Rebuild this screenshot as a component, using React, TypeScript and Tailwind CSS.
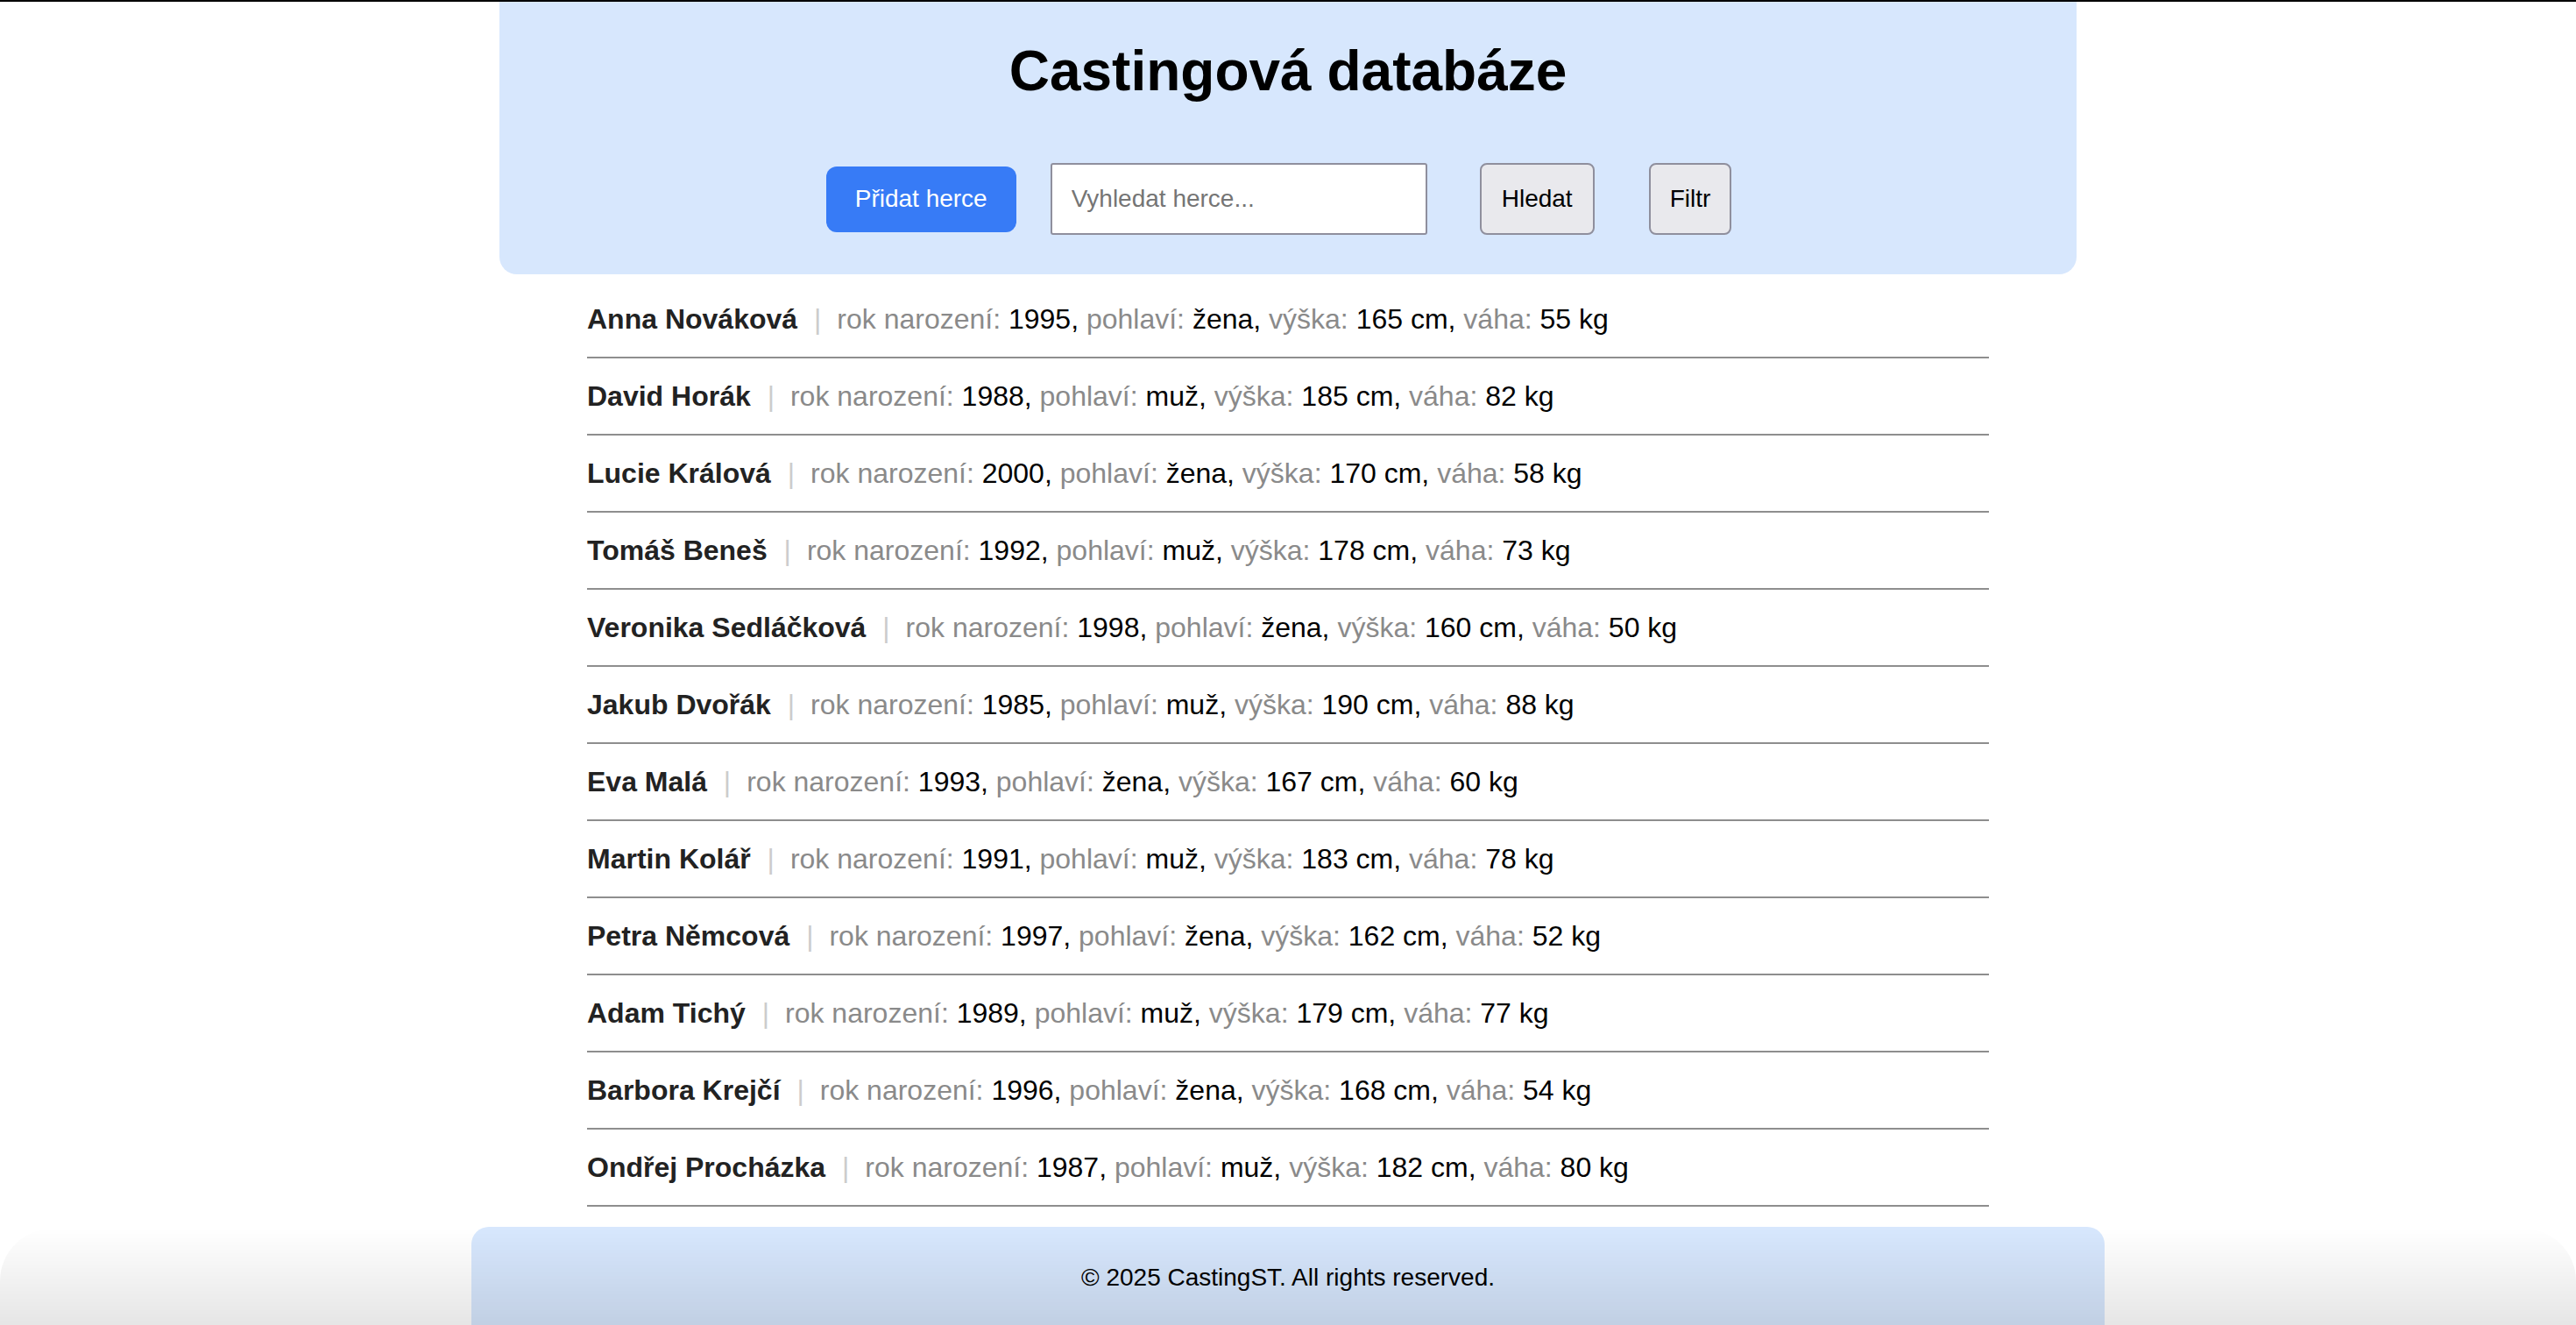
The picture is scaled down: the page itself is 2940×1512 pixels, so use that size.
import React from 'react';

type Actor = {
  name: string;
  year: number;
  gender: string;
  height: number;
  weight: number;
};

const actors: Actor[] = [
  { name: 'Anna Nováková', year: 1995, gender: 'žena', height: 165, weight: 55 },
  { name: 'David Horák', year: 1988, gender: 'muž', height: 185, weight: 82 },
  { name: 'Lucie Králová', year: 2000, gender: 'žena', height: 170, weight: 58 },
  { name: 'Tomáš Beneš', year: 1992, gender: 'muž', height: 178, weight: 73 },
  { name: 'Veronika Sedláčková', year: 1998, gender: 'žena', height: 160, weight: 50 },
  { name: 'Jakub Dvořák', year: 1985, gender: 'muž', height: 190, weight: 88 },
  { name: 'Eva Malá', year: 1993, gender: 'žena', height: 167, weight: 60 },
  { name: 'Martin Kolář', year: 1991, gender: 'muž', height: 183, weight: 78 },
  { name: 'Petra Němcová', year: 1997, gender: 'žena', height: 162, weight: 52 },
  { name: 'Adam Tichý', year: 1989, gender: 'muž', height: 179, weight: 77 },
  { name: 'Barbora Krejčí', year: 1996, gender: 'žena', height: 168, weight: 54 },
  { name: 'Ondřej Procházka', year: 1987, gender: 'muž', height: 182, weight: 80 },
];

function ActorRow({ actor }: { actor: Actor }) {
  return (
    <li className="py-[24px] border-b-2 border-[#8e8e8e] text-[32px] leading-[38px] whitespace-nowrap">
      <strong className="font-bold text-[#222222]">{actor.name}</strong>{' '}
      <span className="ml-[10px] mr-[18px] text-[#cccccc]">|</span>
      <span className="text-[#8a8a8a]">rok narození:</span> <span className="text-black">{actor.year},</span>{' '}
      <span className="text-[#8a8a8a]">pohlaví:</span> <span className="text-black">{actor.gender},</span>{' '}
      <span className="text-[#8a8a8a]">výška:</span> <span className="text-black">{actor.height} cm,</span>{' '}
      <span className="text-[#8a8a8a]">váha:</span> <span className="text-black">{actor.weight} kg</span>
    </li>
  );
}

export default function App() {
  return (
    <div className="min-h-screen bg-white border-t-2 border-black font-['Liberation_Sans',Arial,sans-serif]">
      {/* Header */}
      <header className="w-[1800px] mx-auto bg-[#d7e7fd] rounded-b-[20px] pt-[42px] pb-[45px]">
        <h1 className="text-center text-[64px] leading-[74px] font-bold text-black">Castingová databáze</h1>
        <div className="mt-[68px] flex items-center justify-center pr-[21px]">
          <button className="h-[75px] px-[33px] rounded-[12px] bg-[#377bf6] text-white text-[28px]">
            Přidat herce
          </button>
          <input
            type="text"
            placeholder="Vyhledat herce..."
            className="ml-[39px] w-[430px] h-[82px] pl-[22px] bg-white border-2 border-[#8f8f9d] rounded-[3px] text-[28px] placeholder:text-[#757575] outline-none"
          />
          <button className="ml-[60px] h-[82px] px-[23px] bg-[#e9e9ed] border-2 border-[#8f8f9d] rounded-[8px] text-[28px] text-black">
            Hledat
          </button>
          <button className="ml-[62px] h-[82px] px-[22px] bg-[#e9e9ed] border-2 border-[#8f8f9d] rounded-[8px] text-[28px] text-black">
            Filtr
          </button>
        </div>
      </header>

      {/* Actor list */}
      <ul className="w-[1600px] mx-auto mt-[8px]">
        {actors.map((a) => (
          <ActorRow key={a.name} actor={a} />
        ))}
      </ul>

      {/* Footer */}
      <footer className="w-[1864px] mx-auto mt-[23px] h-[112px] bg-[#d7e7fd] rounded-t-[20px] pt-[42px] text-center text-[28px] leading-[32px] text-black">
        © 2025 CastingST. All rights reserved.
      </footer>

      {/* bottom shadow */}
      <div className="fixed bottom-0 left-0 right-0 h-[110px] pointer-events-none rounded-t-[60px] bg-gradient-to-b from-transparent to-black/10" />
    </div>
  );
}
